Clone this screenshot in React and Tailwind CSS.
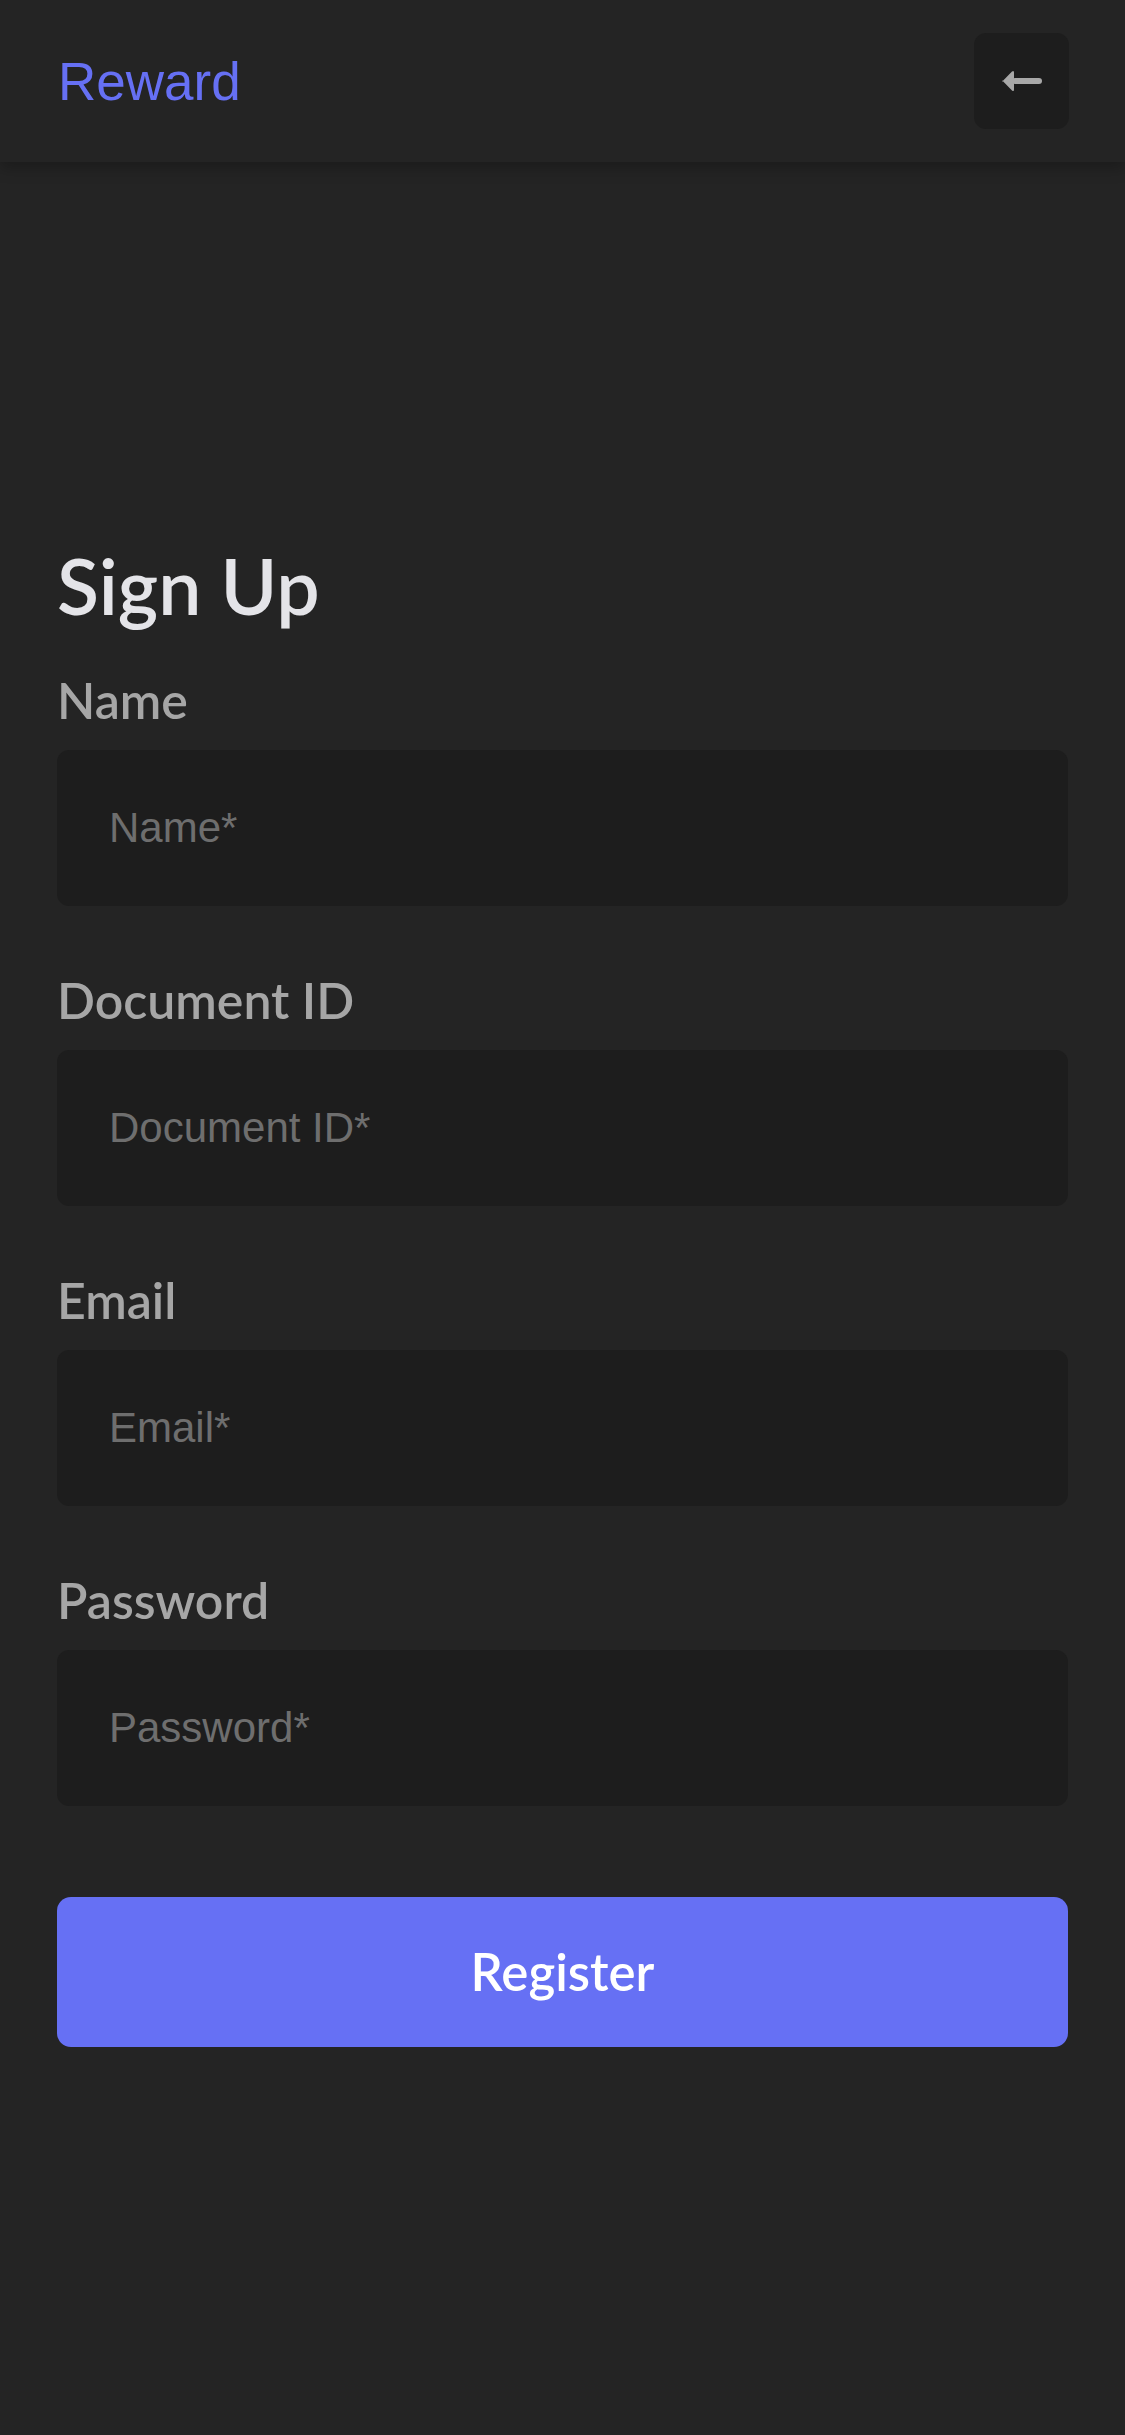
import React from 'react';

// Sign up form fields
const fields = [
  { label: 'Name', placeholder: 'Name*', type: 'text' },
  { label: 'Document ID', placeholder: 'Document ID*', type: 'text' },
  { label: 'Email', placeholder: 'Email*', type: 'email' },
  { label: 'Password', placeholder: 'Password*', type: 'password' },
];

const BackArrow = () => (
  <svg width="41" height="22" viewBox="0 0 41 22" fill="#a8a8a8">
    <path d="M1 11.8 L11 1.5 Q13 0 13 2.5 L13 19.5 Q13 22 11 20.5 L1 10.2 Z" />
    <rect x="11" y="8" width="30" height="6" rx="3" />
  </svg>
);

const App = () => {
  return (
    <div className="min-h-screen bg-[#242424] font-['Lato','Noto_Sans',sans-serif]">
      {/* Header */}
      <header className="h-[162px] flex items-center justify-between pl-[58px] pr-[56px] bg-[#242424] shadow-[0_6px_14px_rgba(0,0,0,0.25)]">
        <span className="text-[53px] leading-none text-[#6670f4] font-['Liberation_Sans',sans-serif]">Reward</span>
        <button className="w-[95px] h-[96px] rounded-[12px] bg-[#1d1d1d] flex items-center justify-center">
          <BackArrow />
        </button>
      </header>

      {/* Form */}
      <main className="px-[57px] pt-[385px] pb-[200px]">
        <h1 className="text-[77px] leading-none font-semibold text-[#e4e4e8] mb-[51px]">Sign Up</h1>
        <form className="flex flex-col">
          {fields.map((field, index) => (
            <div key={index} className="flex flex-col mb-[69px]">
              <label className="text-[50px] leading-none font-semibold text-[#a6a6a6] mb-[25px]">
                {field.label}
              </label>
              <input
                type={field.type}
                placeholder={field.placeholder}
                className="h-[156px] rounded-[12px] bg-[#1d1d1d] pl-[52px] text-[42px] text-[#cccccc] placeholder:text-[#6e6e6e] outline-none font-['Liberation_Sans',sans-serif]"
              />
            </div>
          ))}
          <button
            type="button"
            className="mt-[22px] h-[150px] rounded-[14px] bg-[#6670f4] text-white text-[51px] font-semibold"
          >
            Register
          </button>
        </form>
      </main>
    </div>
  );
};

export default App;
